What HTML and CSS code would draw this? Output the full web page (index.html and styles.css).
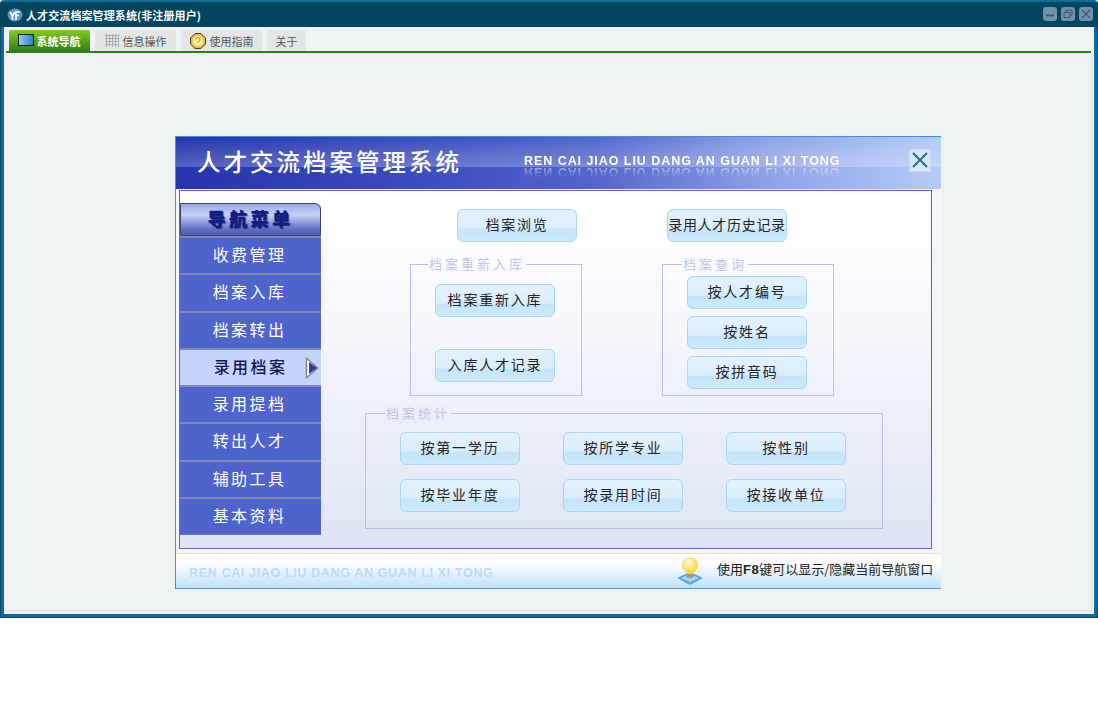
FILE: index.html
```html
<!DOCTYPE html>
<html lang="zh-CN">
<head>
<meta charset="utf-8">
<title>人才交流档案管理系统</title>
<link rel="stylesheet" href="styles.css">
</head>
<body>
<div class="window">
  <header class="titlebar">
    <svg class="app-icon" viewBox="0 0 16 14" width="16" height="14"><ellipse cx="8" cy="7" rx="7.5" ry="6.5" fill="#5f93c4"/><path d="M3 4l2.5 4V12M8 4L5.5 8" stroke="#fff" stroke-width="1.8" fill="none"/><path d="M9 12V4h4M9 7.5h3" stroke="#fff" stroke-width="1.6" fill="none"/></svg>
    <span class="title">人才交流档案管理系统(非注册用户)</span>
    <div class="win-controls">
      <span class="win-btn"><svg viewBox="0 0 14 14" width="14" height="14"><path d="M3 8.5h8" stroke="#3f5870" stroke-width="2"/></svg></span>
      <span class="win-btn"><svg viewBox="0 0 14 14" width="14" height="14"><path d="M5 5V3h6v5H9M3 5.500h6v5H3z" stroke="#3f5870" fill="none"/></svg></span>
      <span class="win-btn"><svg viewBox="0 0 14 14" width="14" height="14"><path d="M3 3l8 8M11 3l-8 8" stroke="#3f5870" stroke-width="1.200"/></svg></span>
    </div>
  </header>
  <nav class="tabs">
    <div class="tab-strip">
      <div class="tab tab-active">
        <svg viewBox="0 0 16 13" width="16" height="13"><defs><linearGradient id="mon" x1="0" x2="1"><stop offset="0" stop-color="#9fd0ee"/><stop offset="1" stop-color="#2a78c0"/></linearGradient></defs><rect x=".5" y=".5" width="15" height="11" fill="url(#mon)" stroke="#0b1e3a"/></svg>
        <span>系统导航</span>
      </div>
      <div class="tab">
        <svg viewBox="0 0 14 13" width="14" height="13"><path d="M0 1.500h14M0 4.500h14M0 7.500h14M0 10.500h14M1.500 0v13M4.500 0v13M7.500 0v13M10.500 0v13M13.500 0v13" stroke="#a0a0a0" stroke-width=".8"/></svg>
        <span>信息操作</span>
      </div>
      <div class="tab">
        <svg viewBox="0 0 16 16" width="16" height="16"><path d="M5 .6h6L15.400 5v6L11 15.400H5L.6 11V5z" fill="#f6c94a" stroke="#40300c"/><circle cx="8" cy="8" r="5" fill="#fbe9a8"/><path d="M6 6.500a2 2 0 1 1 3 2c-.7.4-1 .7-1 1.500" stroke="#e0a030" stroke-width="1.300" fill="none"/></svg>
        <span>使用指南</span>
      </div>
      <div class="tab"><span>关于</span></div>
    </div>
  </nav>
  <main class="content">
    <section class="panel">
      <div class="panel-head">
        <h1 class="panel-title">人才交流档案管理系统</h1>
        <span class="panel-pinyin">REN CAI JIAO LIU DANG AN GUAN LI XI TONG</span>
        <button class="panel-close" type="button"><svg viewBox="0 0 18 18" width="18" height="18"><path d="M2 2l14 14M16 2L2 16" stroke="#2f7198" stroke-width="2.200"/></svg></button>
      </div>
      <div class="panel-body">
        <aside class="side">
          <div class="side-head">导航菜单</div>
          <div class="side-item">收费管理</div>
          <div class="side-item">档案入库</div>
          <div class="side-item">档案转出</div>
          <div class="side-item side-active">录用档案
            <svg class="side-arrow" viewBox="0 0 14 22" width="14" height="22"><path d="M1.500 1l11 10-11 10z" fill="#fff" stroke="#85858f" stroke-width="1.500"/><path d="M4 5l8 6-8 6z" fill="#2c3ca8"/></svg>
          </div>
          <div class="side-item">录用提档</div>
          <div class="side-item">转出人才</div>
          <div class="side-item">辅助工具</div>
          <div class="side-item">基本资料</div>
        </aside>
        <div class="main">
          <div class="row-top">
            <button class="btn" type="button">档案浏览</button>
            <button class="btn btn-tight" type="button">录用人才历史记录</button>
          </div>
          <div class="row-groups">
            <fieldset class="group group-intake">
              <legend>档案重新入库</legend>
              <div class="stack stack-wide">
                <button class="btn" type="button">档案重新入库</button>
                <button class="btn" type="button">入库人才记录</button>
              </div>
            </fieldset>
            <fieldset class="group">
              <legend>档案查询</legend>
              <div class="stack">
                <button class="btn" type="button">按人才编号</button>
                <button class="btn" type="button">按姓名</button>
                <button class="btn" type="button">按拼音码</button>
              </div>
            </fieldset>
          </div>
          <fieldset class="group group-stats">
            <legend>档案统计</legend>
            <div class="stats">
              <button class="btn" type="button">按第一学历</button>
              <button class="btn" type="button">按所学专业</button>
              <button class="btn" type="button">按性别</button>
              <button class="btn" type="button">按毕业年度</button>
              <button class="btn" type="button">按录用时间</button>
              <button class="btn" type="button">按接收单位</button>
            </div>
          </fieldset>
        </div>
      </div>
      <footer class="panel-foot">
        <span class="foot-pinyin">REN CAI JIAO LIU DANG AN GUAN LI XI TONG</span>
        <svg class="bulb" viewBox="0 0 28 30" width="28" height="30"><defs><radialGradient id="gl" cx=".4" cy=".35" r=".7"><stop offset="0" stop-color="#fffde0"/><stop offset="1" stop-color="#f5d320"/></radialGradient></defs><path d="M1 22l13-6 13 6-13 7z" fill="#5aa6e6"/><path d="M5 22l9-4 9 4-9 4z" fill="#a8d4f6"/><rect x="10.500" y="17" width="7" height="5" rx="1" fill="#9a9a8a"/><circle cx="14" cy="9" r="8" fill="url(#gl)"/><rect x="11" y="14" width="6" height="4" fill="#f5d830"/></svg>
        <span class="foot-tip">使用<b>F8</b>键可以显示/隐藏当前导航窗口</span>
      </footer>
    </section>
  </main>
</div>
</body>
</html>
```

FILE: styles.css
```css
* { box-sizing: border-box; }
html, body { margin: 0; padding: 0; background: #fff; }
body { font-family: "Noto Sans CJK SC", "Liberation Sans", sans-serif; }

.window {
  width: 1098px;
  height: 618px;
  display: flex;
  flex-direction: column;
  background: #0b6d9f;
  border: 1px solid #04465f;
  border-top: 2px solid #0a6f9e;
  border-radius: 4px 4px 0 0;
  overflow: hidden;
}

.titlebar {
  height: 25px;
  flex: none;
  display: flex;
  align-items: center;
  padding-left: 6px;
  background: #04465f;
}
.app-icon { flex: none; margin-right: 3px; }
.title {
  color: #fff;
  font-size: 11px;
  font-weight: 700;
  letter-spacing: .1px;
  line-height: 16px;
  white-space: nowrap;
}
.win-controls { margin-left: auto; margin-right: 4px; display: flex; gap: 4px; margin-top: -2px; }
.win-btn {
  width: 14px;
  height: 14px;
  background: #7391ab;
  border-radius: 3px;
  display: block;
}
.win-btn svg { display: block; }

.tabs {
  flex: none;
  height: 26px;
  margin: 0 3px;
  padding: 0 3px 0 2px;
  background: #eef2f3;
}
.tab-strip {
  height: 26px;
  background: #f0f3f3;
  border-bottom: 2px solid #2f7d1e;
  display: flex;
  align-items: flex-end;
  gap: 5px;
  padding-left: 3px;
}
.tab {
  height: 21px;
  padding: 0 8px;
  min-width: 39px;
  background: #e4e5e5;
  color: #555;
  font-size: 11px;
  display: flex;
  align-items: center;
  justify-content: center;
  gap: 4px;
  border-radius: 2px 2px 0 0;
  white-space: nowrap;
}
.tab:nth-child(2) { width: 81px; }
.tab:nth-child(3) { width: 81px; }
.tab-active {
  width: 81px;
  gap: 3px;
  padding-right: 9px;
  background: linear-gradient(#86cb1c, #2f7f18);
  color: #fff;
  font-weight: 700;
}
.tab svg { flex: none; }

.content {
  flex: 1;
  margin: 0 3px 3px;
  background: #eef2f3;
  padding: 83px 0 0 171px;
  box-shadow:
    inset -2px -3px 0 #eef2f3,
    inset -3px -4px 0 #dde1e1;
}

.panel {
  width: 766px;
  height: 453px;
  display: flex;
  flex-direction: column;
  background: #f3f6fb;
  border-left: 1px solid #3e90dc;
  border-top: 1px solid #3e90dc;
}

.panel-head {
  height: 52px;
  flex: none;
  display: flex;
  align-items: center;
  padding: 0 12px 3px 21px;
  background:
    linear-gradient(180deg, rgba(255,255,255,0) 0, rgba(255,255,255,.24) 57%, rgba(255,255,255,0) 57%),
    linear-gradient(90deg, #2334ad 0, #3d50c0 35%, #5266cc 55%, #8ea3e6 78%, #b4cbf8 100%);
}
.panel-title {
  margin: -2px 0 0;
  width: 327px;
  flex: none;
  color: #fff;
  font-size: 23.500px;
  font-weight: 500;
  letter-spacing: 3px;
  line-height: 32px;
  white-space: nowrap;
}
.panel-pinyin {
  font-family: "Liberation Sans", sans-serif;
  font-size: 12.500px;
  font-weight: 700;
  letter-spacing: .95px;
  color: #fff;
  line-height: 14px;
  white-space: nowrap;
  flex: none;
  width: 370px;
  margin-top: -2px;
  -webkit-box-reflect: below -3px linear-gradient(transparent 10%, rgba(255,255,255,.6));
}
.panel-close {
  flex: none;
  width: 22px;
  height: 23px;
  margin: -3px 0 0 15px;
  padding: 1px;
  border: 1px solid #c7dcee;
  background: #d7e8f4;
  border-radius: 1px;
}
.panel-close svg { display: block; }

.panel-body {
  flex: none;
  width: 753px;
  height: 359px;
  margin: 1px 0 0 3px;
  border: 1px solid #5a62c8;
  background: linear-gradient(#fff 0, #fff 8%, #dfe5f5 100%);
  display: flex;
  padding: 12px 0 0 0;
}

.side { width: 141px; height: 332px; flex: none; display: flex; flex-direction: column; }
.side-head {
  height: 33px;
  flex: none;
  border: 1px solid #3f4360;
  border-top-right-radius: 6px;
  background: linear-gradient(#9ba9ea, #c6cff5 35%, #6272cc 80%, #4b57aa);
  color: #101c8c;
  font-size: 18px;
  font-weight: 900;
  letter-spacing: 3.500px;
  text-align: center;
  line-height: 29px;
  text-shadow: 1px 1px 1px #222a66;
}
.side-item {
  flex: 1;
  position: relative;
  background: #4f63cd;
  border-top: 2px solid #8088b8;
  color: #fff;
  font-size: 16px;
  letter-spacing: 2.400px;
  text-align: center;
  line-height: 32px;
  padding-right: 2px;
  font-family: "Noto Sans CJK SC", sans-serif;
}
.side-item:last-child { border-bottom: 1px solid #6a74b8; }
.side-active {
  background: #c6d4fb;
  color: #14145a;
  font-weight: 500;
  padding-right: 0;
}
.side-arrow { position: absolute; right: 2px; top: 7px; }

.main { padding: 6px 0 0 44px; flex: 1; min-width: 0; }

.row-top { display: flex; gap: 90px; padding-left: 92px; }

.btn {
  width: 120px;
  height: 33px;
  flex: none;
  padding: 0 0 4px;
  border: 1px solid #a8d6f4;
  border-radius: 6px;
  background: linear-gradient(#e2f1fd 0, #dceefc 58%, #c5e5fb 62%, #cde9fc 100%);
  color: #222;
  font-family: "Noto Sans CJK SC", sans-serif;
  font-size: 14px;
  letter-spacing: 1.800px;
  white-space: nowrap;
  line-height: 24px;
}
.btn-tight { letter-spacing: .7px; }

.group {
  margin: 0;
  padding: 0;
  min-width: 0;
  width: 172px;
  border: 1px solid #b7bfea;
  border-radius: 0;
}
.group legend {
  margin-left: 19px;
  padding: 0 1px;
  color: #bfc5ee;
  font-size: 13px;
  letter-spacing: 3px;
  line-height: 16px;
  height: 16px;
}
.group-intake legend { margin-left: 17px; }
.row-groups { display: flex; gap: 80px; margin: 14px 0 0 45px; height: 140px; }
.row-groups .group { height: 140px; }

.stack { display: flex; flex-direction: column; gap: 7px; padding: 4px 0 0 24px; }
.stack-wide { gap: 32px; padding-top: 12px; }

.group-stats { width: 518px; height: 124px; margin-top: 9px; }
.stats {
  display: grid;
  grid-template-columns: repeat(3, 120px);
  column-gap: 43px;
  row-gap: 14px;
  padding: 11px 0 0 34px;
}

.panel-foot {
  flex: none;
  height: 36px;
  margin-top: 4px;
  display: flex;
  align-items: center;
  padding-left: 13px;
  border-top: 1px solid #f0dcc8;
  border-bottom: 1px solid #4c9ae0;
  background: linear-gradient(#fff 0, #fff 25%, #bfe2fb 100%);
}
.foot-pinyin {
  font-family: "Liberation Sans", sans-serif;
  font-size: 12.500px;
  font-weight: 700;
  letter-spacing: .65px;
  color: #bcdcf5;
  width: 487px;
  flex: none;
  white-space: nowrap;
  margin-top: 3px;
}
.bulb { flex: none; margin-right: 13px; margin-top: -1px; }
.foot-tip { color: #222; font-size: 13px; white-space: nowrap; margin-top: -5px; }
.foot-tip b { font-family: "Liberation Sans", sans-serif; letter-spacing: .5px; }
```
